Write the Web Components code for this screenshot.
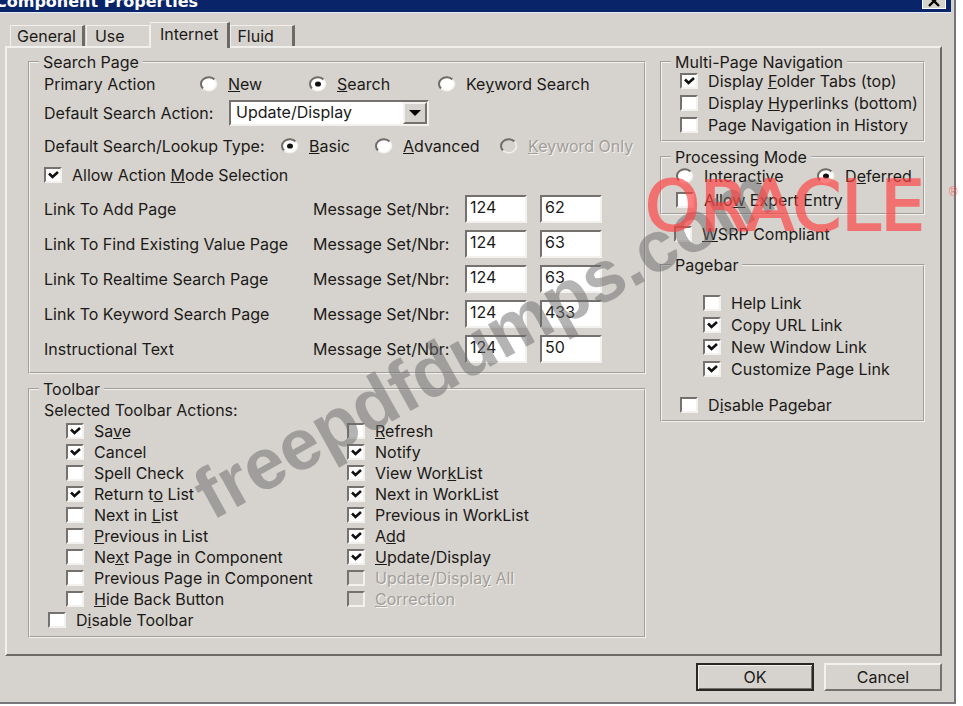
<!DOCTYPE html>
<html lang="en">
<head>
<meta charset="utf-8">
<title>Component Properties</title>
<style>
  body {
    margin: 0;
    background: #fff;
    color: #1c1a18;
    font: 16px/20px Inter, "Liberation Sans", sans-serif;
    overflow-x: hidden;
  }
  .left, .right {
    display: flex;
    flex-direction: column;
    gap: 6px;
    min-width: 0;
  }
  .row {
    display: grid;
    align-items: center;
  }
  .primary { grid-template-columns: 156px 109px 129px auto; padding-top: 3px; }
  .action { grid-template-columns: 185px 200px; margin-top: 6px; }
  .lookup { grid-template-columns: 237px 94px 125px auto; margin-top: 10px; }
  .allow { margin-top: 9px; }
  .links {
    display: grid;
    gap: 7px;
    margin: 10px 0 9px;
  }
  .caption { padding-top: 2px; }
  .actions {
    display: grid;
    grid-template-columns: 281px auto;
    grid-template-rows: repeat(9, 21px);
    grid-auto-flow: column;
    align-items: center;
    padding-left: 22px;
  }
  .toolbar-off { padding: 1px 0 6px 4px; }
  .stack {
    display: grid;
    gap: 2px;
    padding: 0 0 5px 4px;
  }
  .mode {
    display: grid;
    grid-template-columns: 141px auto;
    row-gap: 4px;
    padding-bottom: 3px;
  }
  .wsrp { padding: 3px 0 6px 14px; }
  .pagebar {
    display: grid;
    gap: 2px;
    padding: 19px 0 16px 27px;
  }
</style>
</head>
<body>

<prop-dialog heading="Component Properties">
  <tab-strip slot="tabs" tabs="General,Use,Internet,Fluid" selected="Internet"></tab-strip>

  <div class="left">
    <group-box heading="Search Page">
      <div class="row primary">
        <span>Primary Action</span>
        <option-item type="radio"><u>N</u>ew</option-item>
        <option-item type="radio" checked><u>S</u>earch</option-item>
        <option-item type="radio">Ke<u>y</u>word Search</option-item>
      </div>
      <drop-down class="action" label="Default Search Action:" value="Update/Display"></drop-down>
      <div class="row lookup">
        <span>Default Search/Lookup Type:</span>
        <option-item type="radio" checked><u>B</u>asic</option-item>
        <option-item type="radio"><u>A</u>dvanced</option-item>
        <option-item type="radio" disabled><u>K</u>eyword Only</option-item>
      </div>
      <option-item class="allow" type="checkbox" checked>Allow Action <u>M</u>ode Selection</option-item>
      <div class="links">
        <message-row set="124" nbr="62">Link To Add Page</message-row>
        <message-row set="124" nbr="63">Link To Find Existing Value Page</message-row>
        <message-row set="124" nbr="63">Link To Realtime Search Page</message-row>
        <message-row set="124" nbr="433">Link To Keyword Search Page</message-row>
        <message-row set="124" nbr="50">Instructional Text</message-row>
      </div>
    </group-box>

    <group-box heading="Toolbar">
      <div class="caption">Selected Toolbar Actions:</div>
      <div class="actions">
        <option-item type="checkbox" checked>Sa<u>v</u>e</option-item>
        <option-item type="checkbox" checked>Cancel</option-item>
        <option-item type="checkbox">Spell Check</option-item>
        <option-item type="checkbox" checked>Return t<u>o</u> List</option-item>
        <option-item type="checkbox">Next in <u>L</u>ist</option-item>
        <option-item type="checkbox"><u>P</u>revious in List</option-item>
        <option-item type="checkbox">Ne<u>x</u>t Page in Component</option-item>
        <option-item type="checkbox">Previous Page in Component</option-item>
        <option-item type="checkbox"><u>H</u>ide Back Button</option-item>
        <option-item type="checkbox"><u>R</u>efresh</option-item>
        <option-item type="checkbox" checked>Notify</option-item>
        <option-item type="checkbox" checked>View Wor<u>k</u>List</option-item>
        <option-item type="checkbox" checked>Next in WorkList</option-item>
        <option-item type="checkbox" checked>Previous in WorkList</option-item>
        <option-item type="checkbox" checked>A<u>d</u>d</option-item>
        <option-item type="checkbox" checked><u>U</u>pdate/Display</option-item>
        <option-item type="checkbox" disabled>Update/Displa<u>y</u> All</option-item>
        <option-item type="checkbox" disabled><u>C</u>orrection</option-item>
      </div>
      <option-item class="toolbar-off" type="checkbox">D<u>i</u>sable Toolbar</option-item>
    </group-box>
  </div>

  <div class="right">
    <group-box heading="Multi-Page Navigation">
      <div class="stack">
        <option-item type="checkbox" checked>Display <u>F</u>older Tabs (top)</option-item>
        <option-item type="checkbox">Display <u>H</u>yperlinks (bottom)</option-item>
        <option-item type="checkbox">Page Navigation in History</option-item>
      </div>
    </group-box>

    <group-box heading="Processing Mode">
      <div class="mode">
        <option-item type="radio">Interac<u>t</u>ive</option-item>
        <option-item type="radio" checked>D<u>e</u>ferred</option-item>
        <option-item type="checkbox">Allo<u>w</u> Expert Entry</option-item>
      </div>
    </group-box>

    <option-item class="wsrp" type="checkbox"><u>W</u>SRP Compliant</option-item>

    <group-box heading="Pagebar">
      <div class="pagebar">
        <option-item type="checkbox">Help Link</option-item>
        <option-item type="checkbox" checked>Copy URL Link</option-item>
        <option-item type="checkbox" checked>New Window Link</option-item>
        <option-item type="checkbox" checked>Customize Page Link</option-item>
      </div>
      <div class="stack">
        <option-item type="checkbox">D<u>i</u>sable Pagebar</option-item>
      </div>
    </group-box>
  </div>

  <push-button slot="buttons" default>OK</push-button>
  <push-button slot="buttons">Cancel</push-button>
</prop-dialog>

<site-stamp></site-stamp>
<brand-stamp></brand-stamp>

<script>
// attach an open shadow root holding the given markup
function render(el, html) {
  const template = document.createElement('template');
  template.innerHTML = html;
  el.attachShadow({mode: 'open'});
  el.shadowRoot.appendChild(template.content.cloneNode(true));
  return el.shadowRoot;
}

class PropDialog extends HTMLElement {
  constructor() {
    super();
    const root = render(this, `
<style>
  :host {
    display: block;
    margin-right: 7px;
    background: #d6d3ce;
    border-right: 2px solid #76767c;
    border-bottom: 2px solid #76767c;
  }
  header {
    display: flex;
    justify-content: space-between;
    height: 12px;
    margin-right: 3px;
    overflow: hidden;
    background: #0a246a;
    border-bottom: 1px solid #e4ecf8;
    color: #fff;
  }
  h1 {
    margin: -8px 0 0 -5px;
    font: bold 16px/20px "DejaVu Sans", sans-serif;
  }
  .close {
    width: 24px;
    height: 17px;
    margin: -8px 5px 0 0;
    padding: 0;
    border: 1px solid #fff;
    background: #d6d3ce;
  }
  .close svg { display: block; margin: 1px auto; }
  .panel {
    display: grid;
    grid-template-columns: minmax(0, 7fr) minmax(0, 3fr);
    gap: 14px;
    align-items: start;
    margin: 0 12px 0 5px;
    padding: 5px 15px 16px 21px;
    border: 2px solid;
    border-color: #f1efeb #6c6967 #6c6967 #f1efeb;
  }
  footer {
    display: flex;
    justify-content: flex-end;
    gap: 10px;
    padding: 7px 12px 11px;
  }
</style>
<header>
  <h1></h1>
  <button class="close" aria-label="Close">
    <svg width="14" height="12" viewBox="0 0 14 12"><path d="M2 1l10 10M12 1L2 11" stroke="#000" stroke-width="2.4"/></svg>
  </button>
</header>
<slot name="tabs"></slot>
<main class="panel"><slot></slot></main>
<footer><slot name="buttons"></slot></footer>
`);
    root.querySelector('h1').innerText = this.getAttribute('heading');
  }
}

class TabStrip extends HTMLElement {
  constructor() {
    super();
    const root = render(this, `
<style>
  :host {
    display: flex;
    align-items: flex-end;
    padding: 9px 10px 0;
  }
  button {
    height: 21px;
    margin: 0 1px 0 0;
    padding: 0 6px;
    border: solid;
    border-width: 1px 3px 0 1px;
    border-color: #f1efeb #6c6967 #f1efeb #f1efeb;
    background: #d6d3ce;
    color: inherit;
    font: inherit;
  }
  .next-selected {
    width: 64px;
    margin-right: 0;
    padding-left: 8px;
    border-right: 1px solid #f1efeb;
    text-align: left;
  }
  .selected {
    height: 26px;
    margin: 0 0 -2px;
    padding: 0 9px 4px;
    z-index: 1;
  }
  button:last-child { padding-right: 18px; margin-right: 0; }
</style>
`);
    const names = this.getAttribute('tabs').split(',');
    const selected = this.getAttribute('selected');
    names.forEach((name, i) => {
      const button = document.createElement('button');
      button.innerText = name;
      if (name === selected) button.className = 'selected';
      if (names[i + 1] === selected) button.className = 'next-selected';
      root.appendChild(button);
    });
  }
}

class GroupBox extends HTMLElement {
  constructor() {
    super();
    const root = render(this, `
<style>
  :host { display: block; }
  fieldset {
    min-width: 0;
    margin: 0;
    padding: 0 0 0 14px;
    border: 2px groove #f4f2ee;
  }
  legend {
    height: 18px;
    margin-left: -5px;
    padding: 0 4px;
    line-height: 18px;
  }
</style>
<fieldset>
  <legend></legend>
  <slot></slot>
</fieldset>
`);
    root.querySelector('legend').innerText = this.getAttribute('heading');
  }
}

// check box or radio button with its caption
class OptionItem extends HTMLElement {
  constructor() {
    super();
    const root = render(this, `
<style>
  :host { display: block; white-space: nowrap; }
  label {
    display: flex;
    align-items: center;
    gap: 10px;
  }
  .box { display: grid; }
  input, svg { grid-area: 1 / 1; }
  input {
    appearance: none;
    box-sizing: border-box;
    width: 18px;
    height: 16px;
    margin: 0;
    border: 2px solid;
    border-color: #75716e #f3f1ed #f3f1ed #75716e;
    background: #fff;
  }
  input[type=radio] { border: 0; background: none; }
  svg { display: none; pointer-events: none; }
  input[type=radio] ~ .ring { display: block; }
  input[type=radio] ~ .ring .dot { display: none; }
  input[type=radio]:checked ~ .ring .dot { display: block; }
  input[type=checkbox]:checked ~ .tick { display: block; }
  input[type=checkbox]:disabled { background: #d6d3ce; }
  input:disabled ~ .ring .face { fill: #d6d3ce; }
  :host([disabled]) label { color: #a19e9b; text-shadow: 1px 1px #f6f4f0; }
</style>
<label>
  <span class="box">
    <input>
    <svg class="tick" width="18" height="16" viewBox="0 0 18 16"><path d="M5 6.5l3.5 3.5 5.5-5" fill="none" stroke="#111" stroke-width="2.6"/></svg>
    <svg class="ring" width="18" height="16" viewBox="0 0 18 16">
      <ellipse class="face" cx="9" cy="8" rx="7.5" ry="6.5" fill="#fff"/>
      <path d="M3 12.5A7.5 6.5 0 0 1 14.5 3.5" fill="none" stroke="#6f6b68" stroke-width="2"/>
      <path d="M3 12.5A7.5 6.5 0 0 0 14.5 3.5" fill="none" stroke="#f3f1ed" stroke-width="1.5"/>
      <ellipse class="dot" cx="9" cy="8" rx="3" ry="2.6" fill="#111"/>
    </svg>
  </span>
  <span><slot></slot></span>
</label>
`);
    const input = root.querySelector('input');
    input.type = this.getAttribute('type');
    input.checked = this.hasAttribute('checked');
    input.disabled = this.hasAttribute('disabled');
  }
}

class DropDown extends HTMLElement {
  constructor() {
    super();
    const root = render(this, `
<style>
  :host { display: grid; align-items: center; }
  .field { display: grid; }
  select, .arrow { grid-area: 1 / 1; }
  select {
    appearance: none;
    box-sizing: border-box;
    width: 100%;
    height: 26px;
    padding: 0 0 2px 5px;
    border: 2px solid;
    border-color: #75716e #f3f1ed #f3f1ed #75716e;
    border-radius: 0;
    background: #fff;
    color: inherit;
    font: inherit;
  }
  .arrow {
    display: grid;
    place-items: center;
    place-self: center end;
    box-sizing: border-box;
    width: 24px;
    height: 22px;
    margin-right: 2px;
    border: 2px solid;
    border-color: #f3f1ed #75716e #75716e #f3f1ed;
    background: #d6d3ce;
    pointer-events: none;
  }
</style>
<label for="field"></label>
<span class="field">
  <select id="field"><option></option></select>
  <span class="arrow"><svg width="12" height="6" viewBox="0 0 12 6"><path d="M0 0h12l-6 6z" fill="#000"/></svg></span>
</span>
`);
    root.querySelector('label').innerText = this.getAttribute('label');
    root.querySelector('option').innerText = this.getAttribute('value');
  }
}

// page name, then the message set and message number boxes
class MessageRow extends HTMLElement {
  constructor() {
    super();
    const root = render(this, `
<style>
  :host {
    display: grid;
    grid-template-columns: 269px 152px 62px 62px;
    align-items: center;
    white-space: nowrap;
  }
  input {
    box-sizing: border-box;
    width: 62px;
    height: 28px;
    padding: 0 0 4px 3px;
    border: 2px solid;
    border-color: #75716e #f3f1ed #f3f1ed #75716e;
    border-radius: 0;
    background: #fff;
    color: inherit;
    font: inherit;
  }
  #nbr { margin-left: 13px; }
</style>
<span><slot></slot></span>
<label for="set">Message Set/Nbr:</label>
<input id="set">
<input id="nbr" aria-label="Message number">
`);
    root.querySelector('#set').value = this.getAttribute('set');
    root.querySelector('#nbr').value = this.getAttribute('nbr');
  }
}

class PushButton extends HTMLElement {
  constructor() {
    super();
    render(this, `
<style>
  :host { display: block; }
  button {
    display: block;
    box-sizing: border-box;
    width: 118px;
    height: 28px;
    padding: 0;
    border: 2px solid;
    border-color: #f3f1ed #75716e #75716e #f3f1ed;
    background: #d6d3ce;
    color: inherit;
    font: inherit;
  }
  :host([default]) button {
    border-color: #2a2725;
    box-shadow: inset 1px 1px #f3f1ed, inset -1px -1px #75716e;
  }
</style>
<button><slot></slot></button>
`);
  }
}

// slanted grey site name lying over the dialog
class SiteStamp extends HTMLElement {
  constructor() {
    super();
    render(this, `
<style>
  :host {
    position: absolute;
    left: 212px;
    top: 461px;
    transform: rotate(-29deg);
    transform-origin: 0 60px;
    font: bold 72px/70px "Liberation Sans", Arial, sans-serif;
    color: rgba(105, 105, 105, .5);
    pointer-events: none;
    white-space: nowrap;
    z-index: 2;
  }
</style>
<span>freepdfdumps.com</span>
`);
  }
}

class BrandStamp extends HTMLElement {
  constructor() {
    super();
    render(this, `
<style>
  :host {
    position: absolute;
    left: 645px;
    top: 176px;
    display: flex;
    align-items: flex-start;
    gap: 24px;
    color: #ff4040;
    font: 70px/60px "DejaVu Sans", sans-serif;
    opacity: .66;
    pointer-events: none;
    z-index: 3;
  }
  span { -webkit-text-stroke: 2px #ff4040; }
  small { font: 12px/32px "Liberation Sans", sans-serif; }
</style>
<span>ORACLE</span><small>®</small>
`);
  }
}

window.customElements.define('prop-dialog', PropDialog);
window.customElements.define('tab-strip', TabStrip);
window.customElements.define('group-box', GroupBox);
window.customElements.define('option-item', OptionItem);
window.customElements.define('drop-down', DropDown);
window.customElements.define('message-row', MessageRow);
window.customElements.define('push-button', PushButton);
window.customElements.define('site-stamp', SiteStamp);
window.customElements.define('brand-stamp', BrandStamp);
</script>
</body>
</html>
